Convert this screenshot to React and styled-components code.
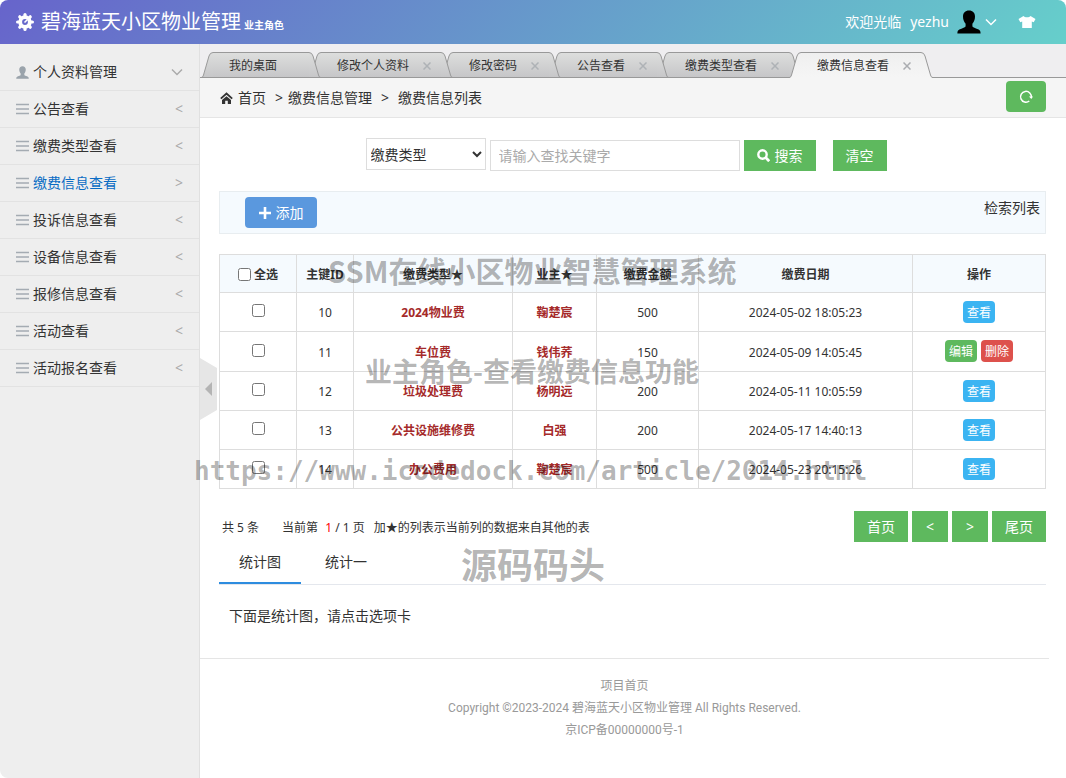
import React, { useState } from "react";
import styled, { createGlobalStyle, css } from "styled-components";

const GlobalStyle = createGlobalStyle`
  * {
    box-sizing: border-box;
  }

  body {
    margin: 0;
    background: #fff;
    color: #333;
    font-family: "Noto Sans", "Noto Sans CJK SC", sans-serif;
    font-size: 14px;
    line-height: 22px;
  }

  button, input, select {
    margin: 0;
    font: inherit;
    color: inherit;
  }

  button {
    padding: 0;
    border: none;
    background: none;
    cursor: pointer;
  }

  a {
    color: inherit;
    text-decoration: none;
  }

  svg {
    display: block;
    flex: none;
  }
`;

const Page = styled.div`
  position: relative;
  display: flex;
  flex-direction: column;
  min-height: 100vh;
  border-radius: 8px;
  overflow: hidden;
`;

const Header = styled.header`
  display: flex;
  align-items: center;
  height: 44px;
  padding: 0 30px 0 16px;
  background: linear-gradient(135deg, #6764cb, #66cfcb);
  color: #fff;
`;

const Logo = styled.a`
  display: flex;
  align-items: center;
  gap: 7px;
  font-size: 20px;
  line-height: 28px;
`;

const LogoText = styled.span`
  padding-top: 3px;
`;

const Role = styled.small`
  margin-left: 3px;
  font-size: 10px;
  font-weight: bold;
`;

const UserBox = styled.div`
  display: flex;
  align-items: center;
  margin-left: auto;
`;

const UserButton = styled.button`
  display: flex;
  align-items: center;
  margin: 0 21px 0 9px;
`;

const Avatar = styled.span`
  margin: 0 4px 0 8px;
`;

const Body = styled.div`
  display: flex;
  flex: 1;
`;

const Sidebar = styled.aside`
  flex: none;
  width: 200px;
  padding-top: 10px;
  background: #eee;
  border-right: 1px solid #e0e0e0;
`;

const MenuItem = styled.a`
  display: flex;
  align-items: center;
  gap: 4px;
  height: 37px;
  padding: 0 16px;
  border-bottom: 1px solid #e2e2e2;
  color: ${(props) => (props.$active ? "#0a6cc4" : "#333")};
`;

const MenuArrow = styled.span`
  margin-left: auto;
  color: #aaa;
`;

const Main = styled.main`
  position: relative;
  flex: 1;
  min-width: 0;
`;

const Handle = styled.button`
  position: absolute;
  top: 314px;
  left: 0;
  display: flex;
  align-items: center;
  width: 17px;
  height: 62px;
  padding-left: 5px;
  background: #e6e6e6;
  clip-path: polygon(0 0, 100% 16%, 100% 84%, 0 100%);
`;

const TabStrip = styled.nav`
  display: flex;
  align-items: flex-end;
  height: 34px;
  padding-left: 1px;
  background: #efeef0;
  box-shadow: inset 0 -1px #999;
`;

const Tab = styled.div`
  position: relative;
  z-index: ${(props) => props.$level};
  display: flex;
  height: 26px;
  margin-right: -12px;
`;

const TabBody = styled.div`
  display: flex;
  align-items: center;
  padding: ${(props) => (props.$closable ? "2px 0 0 16px" : "2px 32px 0 16px")};
  border-top: 1px solid #999;
  border-bottom: 1px solid #999;
  background: linear-gradient(#dddedd, #c6c6c8);
  font-size: 12px;
  white-space: nowrap;
  ${(props) =>
    props.$active &&
    css`
      background: linear-gradient(#efefef, #f5f5f5);
      border-bottom-color: #f5f5f5;
    `}
`;

const CloseButton = styled.button`
  display: flex;
  justify-content: center;
  width: 32px;
  padding-left: 4px;
  color: ${(props) => (props.$active ? "#aaacb0" : "#aeb2b6")};
`;

const Breadcrumb = styled.div`
  display: flex;
  align-items: center;
  height: 40px;
  padding: 0 20px;
  background: #f5f5f5;
  border-bottom: 1px solid #e5e5e5;
`;

const Crumb = styled.a`
  margin-left: ${(props) => props.$gap}px;
`;

const Separator = styled.span`
  width: 8px;
  margin-left: 9px;
`;

const Button = styled.button`
  display: inline-flex;
  align-items: center;
  justify-content: center;
  gap: 5px;
  min-width: ${(props) => props.$width}px;
  height: 31px;
  border-radius: ${(props) => (props.$round ? 4 : 0)}px;
  background: ${(props) => props.$color || "#5eb95e"};
  color: #fff;
`;

const RefreshButton = styled(Button)`
  margin: 0 0 2px auto;
`;

const Content = styled.div`
  padding: 20px 20px 0 19px;
`;

const SearchForm = styled.form`
  display: flex;
  align-items: flex-end;
  justify-content: center;
  gap: 4px;
  padding-right: 13px;
`;

const Select = styled.select`
  width: 120px;
  height: 32px;
  margin-bottom: 1px;
  border: 1px solid #ddd;
  background: #fff;
`;

const SearchInput = styled.input`
  width: 250px;
  height: 31px;
  padding: 0 8px;
  border: 1px solid #ddd;

  &::placeholder {
    color: #aaa;
  }
`;

const ResetButton = styled(Button)`
  margin-left: 13px;
`;

const Toolbar = styled.div`
  display: flex;
  justify-content: space-between;
  margin: 20px 0;
  padding: 5px 5px 5px 25px;
  background: #f5fafe;
  border: 1px solid #e8edf0;
`;

const Table = styled.table`
  width: 100%;
  table-layout: fixed;
  border-collapse: collapse;
  font-size: 12px;
  text-align: center;
`;

const Col = styled.col`
  width: ${(props) => props.$width}px;
`;

const Th = styled.th`
  height: 38px;
  padding: 2px 0 0;
  background: #f5fafe;
  border: 1px solid #ddd;
`;

const Row = styled.tr`
  height: ${(props) => (props.$own ? 40 : 39)}px;
`;

const Td = styled.td`
  padding: 2px 0 0;
  border: 1px solid #ddd;
  ${(props) =>
    props.$linked &&
    css`
      color: #a52a2a;
      font-weight: bold;
    `}
`;

const CheckTd = styled(Td)`
  padding: 0 0 4px;
`;

const ActionTd = styled(Td)`
  padding: 0;
`;

const CheckLabel = styled.label`
  display: flex;
  align-items: center;
  justify-content: center;
  gap: 3px;
`;

const Checkbox = styled.input`
  width: 13px;
  height: 13px;
  vertical-align: middle;
`;

const TagButton = styled.button`
  width: 32px;
  height: 22px;
  padding-top: 1px;
  border-radius: 4px;
  background: ${(props) => props.$color};
  color: #fff;

  & + & {
    margin-left: 4px;
  }
`;

const Pager = styled.div`
  display: flex;
  align-items: center;
  justify-content: space-between;
  margin-top: 22px;
`;

const PagerInfo = styled.div`
  display: flex;
  padding: 2px 0 0 3px;
  font-size: 12px;
  white-space: pre;
`;

const PagerText = styled.span`
  margin-right: ${(props) => props.$space}px;
`;

const CurrentPage = styled.span`
  padding-left: 4px;
  color: #f00;
`;

const PagerButtons = styled.div`
  display: flex;
  gap: 4px;
`;

const ChartTabs = styled.div`
  display: flex;
  gap: 4px;
  height: 43px;
  border-bottom: 1px solid #e4e7ed;
`;

const ChartTab = styled.button`
  height: 42px;
  padding: 0 20px;
  border-bottom: 2px solid ${(props) => (props.$active ? "#2d8cdf" : "transparent")};
`;

const ChartHint = styled.p`
  margin: 20px 10px 31px;
`;

const Footer = styled.footer`
  margin-right: 17px;
  padding-top: 16px;
  border-top: 1px solid #e5e5e5;
  color: #999;
  font-family: Roboto, "Noto Sans CJK SC", sans-serif;
  font-size: 12px;
  text-align: center;

  p {
    margin: 0;
  }
`;

const Watermark = styled.div`
  position: absolute;
  top: ${(props) => props.$top}px;
  left: ${(props) => props.$left}px;
  z-index: 20;
  color: rgba(0, 0, 0, 0.3);
  font-family: ${(props) =>
    props.$mono ? '"DejaVu Sans Mono", monospace' : '"Noto Sans CJK SC", sans-serif'};
  font-size: ${(props) => props.$size}px;
  font-weight: bold;
  line-height: 40px;
  white-space: nowrap;
  pointer-events: none;
`;

const GearIcon = () => (
  <svg width="18" height="18" viewBox="0 0 18 18" fill="none" stroke="#fff">
    <circle cx="9" cy="9" r="4.8" strokeWidth="3.8" />
    {[0, 45, 90, 135, 180, 225, 270, 315].map((angle) => (
      <path
        key={angle}
        d="M9 3V1.6"
        strokeWidth="3.2"
        strokeLinecap="round"
        transform={`rotate(${angle} 9 9)`}
      />
    ))}
    <path d="M8.500 9.500l3-3" strokeWidth="1.600" />
  </svg>
);

const PersonIcon = ({ size, color }) => (
  <svg width={size} height={size} viewBox="0 0 24 24" fill={color}>
    <path d="M12 0.5c3.8 0 6 2.4 6 6 0 3-1 5.4-2.6 7.300v2.200c0 1.200 1.200 1.600 3.600 2.400 3.400 1.100 4.600 1.800 4.600 5.100H.4c0-3.300 1.200-4 4.600-5.100 2.400-.8 3.600-1.200 3.600-2.400v-2.200C7 11.900 6 9.500 6 6.500c0-3.600 2.200-6 6-6z" />
  </svg>
);

const ChevronIcon = ({ color }) => (
  <svg width="12" height="8" viewBox="0 0 12 8" fill="none" stroke={color} strokeWidth="1.500">
    <path d="M1 1.500l5 5 5-5" />
  </svg>
);

const ShirtIcon = () => (
  <svg width="18" height="14" viewBox="0 0 18 14" fill="#fff">
    <path d="M5.500 1C6.500 2.800 11.500 2.800 12.500 1L17.500 4l-1.800 3.300-1.900-.8V13H4.200V6.500l-1.900.8L.5 4z" />
  </svg>
);

const LinesIcon = () => (
  <svg width="13" height="12" viewBox="0 0 13 12" stroke="#a4abb2" strokeWidth="1.400">
    <path d="M0 1.500h13M0 6h13M0 10.500h13" />
  </svg>
);

const HomeIcon = () => (
  <svg width="13" height="12" viewBox="0 0 13 12" fill="#333">
    <path d="M.8 6.600l5.700-5 5.700 5" fill="none" stroke="#333" strokeWidth="1.900" />
    <path d="M6.500 4.300L11 8v4H7.800V8.800H5.200V12H2V8z" />
  </svg>
);

const RefreshIcon = () => (
  <svg width="14" height="14" viewBox="0 0 14 14" fill="none" stroke="#fff" strokeWidth="1.500">
    <path d="M10.300 11A5.400 5.400 0 1 1 12.300 7.500" />
    <path d="M10 6.500h4L12.300 9z" fill="#fff" stroke="none" />
  </svg>
);

const SearchIcon = () => (
  <svg width="13" height="13" viewBox="0 0 13 13" fill="none" stroke="#fff">
    <circle cx="5.500" cy="5.500" r="4.200" strokeWidth="2.400" />
    <path d="M8.600 8.600l3.600 3.600" strokeWidth="2.800" />
  </svg>
);

const PlusIcon = () => (
  <svg width="12" height="12" viewBox="0 0 12 12" stroke="#fff" strokeWidth="2.600">
    <path d="M6 0v12M0 6h12" />
  </svg>
);

const CloseIcon = () => (
  <svg width="8" height="8" viewBox="0 0 8 8" stroke="currentColor" strokeWidth="1.500">
    <path d="M.5.5l7 7M7.500.5l-7 7" />
  </svg>
);

// slanted side of a tab, mirrored for the right hand side
const TabEdge = ({ right, active, id }) => (
  <svg width="12" height="26" viewBox="0 0 12 26">
    <defs>
      <linearGradient id={id} x1="0" y1="0" x2="0" y2="1">
        <stop offset="0" stopColor={active ? "#efefef" : "#dddedd"} />
        <stop offset="1" stopColor={active ? "#f5f5f5" : "#c6c6c8"} />
      </linearGradient>
    </defs>
    <g transform={right ? "matrix(-1 0 0 1 12 0)" : undefined}>
      <path
        d="M0 26C1.500 25.500 2 24.500 2.500 23L8 4Q9 .5 12 .5V26z"
        fill={`url(#${id})`}
      />
      <path d="M0 25.500C1.500 25.500 2 24.500 2.500 23L8 4Q9 .5 12 .5" fill="none" stroke="#999" />
      {!active && <path d="M0 25.500h12" stroke="#999" />}
    </g>
  </svg>
);

const menus = [
  "公告查看",
  "缴费类型查看",
  "缴费信息查看",
  "投诉信息查看",
  "设备信息查看",
  "报修信息查看",
  "活动查看",
  "活动报名查看",
];

const tabs = [
  "我的桌面",
  "修改个人资料",
  "修改密码",
  "公告查看",
  "缴费类型查看",
  "缴费信息查看",
];

const columns = [
  { title: "全选", width: 77 },
  { title: "主键ID", width: 57 },
  { title: "缴费类型★", width: 159 },
  { title: "业主★", width: 84 },
  { title: "缴费金额", width: 102 },
  { title: "缴费日期", width: 214 },
  { title: "操作", width: 133 },
];

const rows = [
  { id: 10, type: "2024物业费", owner: "鞠楚宸", amount: 500, date: "2024-05-02 18:05:23" },
  { id: 11, type: "车位费", owner: "钱伟荞", amount: 150, date: "2024-05-09 14:05:45", own: true },
  { id: 12, type: "垃圾处理费", owner: "杨明远", amount: 200, date: "2024-05-11 10:05:59" },
  { id: 13, type: "公共设施维修费", owner: "白强", amount: 200, date: "2024-05-17 14:40:13" },
  { id: 14, type: "办公费用", owner: "鞠楚宸", amount: 500, date: "2024-05-23 20:15:26" },
];

const PaymentTable = () => (
  <Table>
    <colgroup>
      {columns.map((column) => (
        <Col key={column.title} $width={column.width} />
      ))}
    </colgroup>
    <thead>
      <tr>
        {columns.map((column, index) => (
          <Th key={column.title}>
            {index === 0 ? (
              <CheckLabel>
                <Checkbox type="checkbox" />
                {column.title}
              </CheckLabel>
            ) : (
              column.title
            )}
          </Th>
        ))}
      </tr>
    </thead>
    <tbody>
      {rows.map((row) => (
        <Row key={row.id} $own={row.own}>
          <CheckTd>
            <Checkbox type="checkbox" aria-label={String(row.id)} />
          </CheckTd>
          <Td>{row.id}</Td>
          <Td $linked>{row.type}</Td>
          <Td $linked>{row.owner}</Td>
          <Td>{row.amount}</Td>
          <Td>{row.date}</Td>
          <ActionTd>
            {row.own ? (
              <>
                <TagButton $color="#5eb95e">编辑</TagButton>
                <TagButton $color="#dd514c">删除</TagButton>
              </>
            ) : (
              <TagButton $color="#3bb4f2">查看</TagButton>
            )}
          </ActionTd>
        </Row>
      ))}
    </tbody>
  </Table>
);

const App = () => {
  const [keyword, setKeyword] = useState("");
  const [chart, setChart] = useState("统计图");
  const current = "缴费信息查看";

  return (
    <Page>
      <GlobalStyle />
      <Header>
        <Logo href="#">
          <GearIcon />
          <LogoText>
            碧海蓝天小区物业管理<Role>业主角色</Role>
          </LogoText>
        </Logo>
        <UserBox>
          欢迎光临
          <UserButton>
            yezhu
            <Avatar>
              <PersonIcon size={24} color="#000" />
            </Avatar>
            <ChevronIcon color="#fff" />
          </UserButton>
          <ShirtIcon />
        </UserBox>
      </Header>
      <Body>
        <Sidebar>
          <MenuItem href="#">
            <PersonIcon size={13} color="#9aa3ab" />
            个人资料管理
            <MenuArrow>
              <ChevronIcon color="#aaa" />
            </MenuArrow>
          </MenuItem>
          {menus.map((menu) => (
            <MenuItem key={menu} href="#" $active={menu === current}>
              <LinesIcon />
              {menu}
              <MenuArrow>{menu === current ? ">" : "<"}</MenuArrow>
            </MenuItem>
          ))}
        </Sidebar>
        <Main>
          <TabStrip>
            {tabs.map((tab, index) => {
              const active = tab === current;
              return (
                <Tab key={tab} $level={active ? 10 : tabs.length - index}>
                  <TabEdge active={active} id={`edge-left-${index}`} />
                  <TabBody $active={active} $closable={index > 0}>
                    {tab}
                    {index > 0 && (
                      <CloseButton $active={active} aria-label="关闭">
                        <CloseIcon />
                      </CloseButton>
                    )}
                  </TabBody>
                  <TabEdge right active={active} id={`edge-right-${index}`} />
                </Tab>
              );
            })}
          </TabStrip>
          <Breadcrumb>
            <HomeIcon />
            <Crumb href="#" $gap={5}>首页</Crumb>
            <Separator>&gt;</Separator>
            <Crumb href="#" $gap={5}>缴费信息管理</Crumb>
            <Separator>&gt;</Separator>
            <Crumb href="#" $gap={9}>缴费信息列表</Crumb>
            <RefreshButton $width={40} $round aria-label="刷新">
              <RefreshIcon />
            </RefreshButton>
          </Breadcrumb>
          <Content>
            <SearchForm onSubmit={(e) => e.preventDefault()}>
              <Select aria-label="查找字段">
                <option>缴费类型</option>
              </Select>
              <SearchInput
                aria-label="关键字"
                placeholder="请输入查找关键字"
                value={keyword}
                onChange={(e) => setKeyword(e.target.value)}
              />
              <Button type="submit" $width={72}>
                <SearchIcon />
                搜索
              </Button>
              <ResetButton type="button" $width={54} onClick={() => setKeyword("")}>
                清空
              </ResetButton>
            </SearchForm>
            <Toolbar>
              <Button $width={72} $round $color="#5a98de">
                <PlusIcon />
                添加
              </Button>
              <span>检索列表</span>
            </Toolbar>
            <PaymentTable />
            <Pager>
              <PagerInfo>
                <PagerText $space={23}>共 5 条</PagerText>
                <PagerText $space={9}>
                  当前第 <CurrentPage>1</CurrentPage> / 1 页
                </PagerText>
                <PagerText $space={0}>加★的列表示当前列的数据来自其他的表</PagerText>
              </PagerInfo>
              <PagerButtons>
                <Button $width={54}>首页</Button>
                <Button $width={36}>&lt;</Button>
                <Button $width={36}>&gt;</Button>
                <Button $width={54}>尾页</Button>
              </PagerButtons>
            </Pager>
            <ChartTabs>
              {["统计图", "统计一"].map((name) => (
                <ChartTab key={name} $active={name === chart} onClick={() => setChart(name)}>
                  {name}
                </ChartTab>
              ))}
            </ChartTabs>
            <ChartHint>下面是统计图，请点击选项卡</ChartHint>
          </Content>
          <Footer>
            <p>
              <a href="#">项目首页</a>
            </p>
            <p>Copyright ©2023-2024 碧海蓝天小区物业管理 All Rights Reserved.</p>
            <p>京ICP备00000000号-1</p>
          </Footer>
          <Handle aria-label="收起菜单">
            <svg width="7" height="14" viewBox="0 0 7 14" fill="#b4b4b4">
              <path d="M7 0v14L0 7z" />
            </svg>
          </Handle>
        </Main>
      </Body>
      <Watermark $top={250} $left={328} $size={29}>SSM在线小区物业智慧管理系统</Watermark>
      <Watermark $top={351} $left={365} $size={27}>业主角色-查看缴费信息功能</Watermark>
      <Watermark $top={451} $left={194} $size={26} $mono>
        https://www.icodedock.com/article/2014.html
      </Watermark>
      <Watermark $top={543} $left={461} $size={36}>源码码头</Watermark>
    </Page>
  );
};

export default App;
